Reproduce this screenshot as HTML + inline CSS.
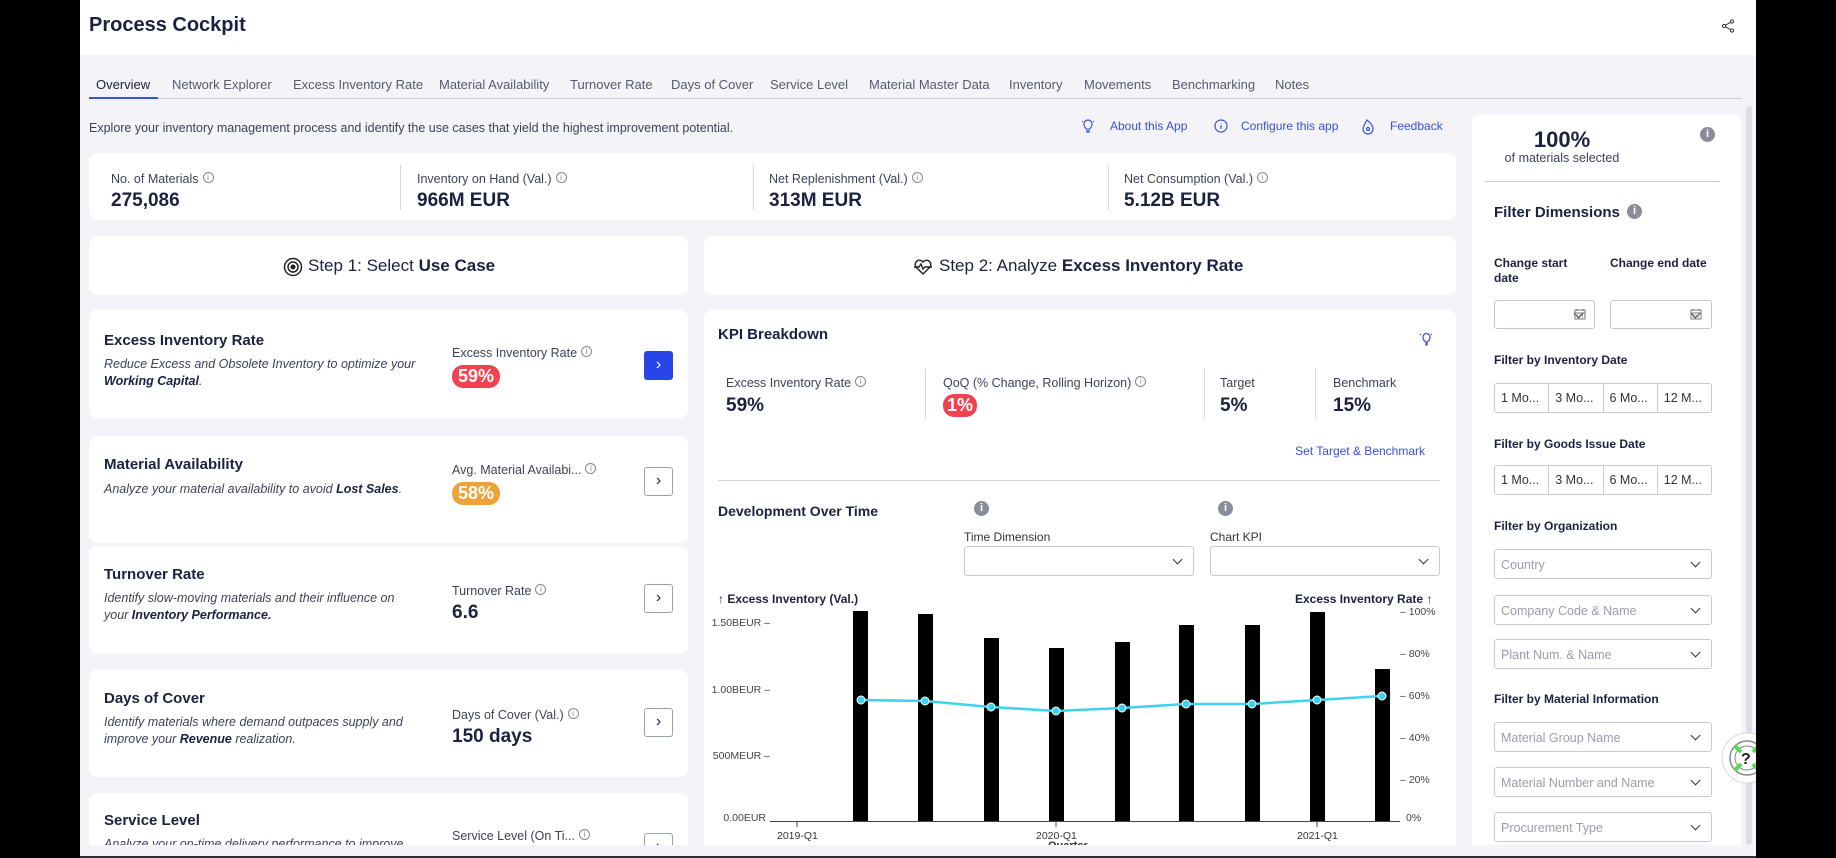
<!DOCTYPE html>
<html><head><meta charset="utf-8"><style>
*{box-sizing:border-box;margin:0;padding:0}
body{width:1836px;height:858px;overflow:hidden;background:#000;font-family:"Liberation Sans",sans-serif;color:#1b2140;position:relative}
.a{position:absolute;white-space:nowrap}
.card{position:absolute;background:#fff;border-radius:8px}
.lbl{font-size:12.5px;color:#3c4257}
.val{font-size:19px;font-weight:bold;color:#1b2140}
.i{display:inline-block;width:11px;height:11px;border:1px solid #888;border-radius:50%;font-size:8px;line-height:9px;text-align:center;color:#888;vertical-align:top;margin-left:4px;font-style:normal}
.ib{position:absolute;width:15px;height:15px;border-radius:50%;background:#8a8d99;color:#fff;font-size:11px;font-weight:bold;text-align:center;line-height:15px}
.ut{font-size:15px;font-weight:bold}
.ud{font-size:12.5px;font-style:italic;color:#3c4257;line-height:17px}
.ud b{color:#1b2140}
.btn{position:absolute;width:29px;height:29px;border:1px solid #9aa0b4;border-radius:3px;background:#fff;text-align:center;line-height:26px;font-size:16px;color:#1b2140}
.badge{display:inline-block;color:#fff;font-weight:bold;font-size:18px;padding:1px 6px;border-radius:11px}
.sel{position:absolute;border:1px solid #c7c9d6;border-radius:3px;background:#fff;height:30px;font-size:12.5px;color:#9a9daa;padding:8px 6px}
.sel:after{content:"";position:absolute;right:12px;top:9px;width:6px;height:6px;border-right:1.5px solid #333;border-bottom:1.5px solid #333;transform:rotate(45deg)}
.fh{position:absolute;font-size:12px;font-weight:bold;color:#1b2140}
.seg{position:absolute;display:flex;border:1px solid #c7c9d6;border-radius:3px;height:30px;background:#fff}
.seg div{flex:1;border-right:1px solid #c7c9d6;font-size:12.5px;line-height:28px;padding-left:6px;color:#333}
.seg div:last-child{border-right:none}
.tab{position:absolute;top:77px;font-size:13px;color:#555b70}
.yl{position:absolute;font-size:10.5px;color:#444;text-align:right;width:70px}
.yr{position:absolute;font-size:10.5px;color:#444}
.bar{position:absolute;width:15px;background:#000}
</style></head><body>
<div style="position:absolute;left:80px;top:0;width:1676px;height:856px;background:#f3f3f8"></div>
<div style="position:absolute;left:80px;top:0;width:1676px;height:55px;background:#fff"></div>
<div class="a" style="left:89px;top:14px;font-size:20px;font-weight:bold">Process Cockpit</div>
<svg class="a" style="left:1721px;top:19px" width="14" height="14" viewBox="0 0 14 14"><circle cx="11" cy="2.5" r="1.6" fill="none" stroke="#333"/><circle cx="3" cy="7" r="1.6" fill="none" stroke="#333"/><circle cx="11" cy="11.5" r="1.6" fill="none" stroke="#333"/><path d="M4.5 6.2L9.5 3.3M4.5 7.8L9.5 10.7" stroke="#333"/></svg>

<div class="tab" style="left:96px;color:#1b2140">Overview</div>
<div class="tab" style="left:172px">Network Explorer</div>
<div class="tab" style="left:293px">Excess Inventory Rate</div>
<div class="tab" style="left:439px">Material Availability</div>
<div class="tab" style="left:570px">Turnover Rate</div>
<div class="tab" style="left:671px">Days of Cover</div>
<div class="tab" style="left:770px">Service Level</div>
<div class="tab" style="left:869px">Material Master Data</div>
<div class="tab" style="left:1009px">Inventory</div>
<div class="tab" style="left:1084px">Movements</div>
<div class="tab" style="left:1172px">Benchmarking</div>
<div class="tab" style="left:1275px">Notes</div>
<div class="a" style="left:89px;top:98px;width:1653px;height:1px;background:#c9cbd8"></div>
<div class="a" style="left:89px;top:97px;width:69px;height:2px;background:#3b4fd8"></div>

<div class="a" style="left:89px;top:121px;font-size:12.5px;color:#3c4257">Explore your inventory management process and identify the use cases that yield the highest improvement potential.</div>
<svg class="a" style="left:1081px;top:118px" width="300" height="18" fill="none" stroke="#3b4fd8" stroke-width="1.2">
<path d="M6 11c-2-1-3-3-3-5a4 4 0 0 1 8 0c0 2-1 4-3 5v3h-2z"/><path d="M1 3l1 1M13 3l-1 1"/>
<circle cx="140" cy="8" r="6"/><path d="M140 7v4M140 5v0.5"/>
<path d="M286 2c3 3 6 5 6 9a5 5 0 0 1-10 0c0-2 1-4 4-9z"/><circle cx="287" cy="11" r="1.5"/>
</svg>
<div class="a" style="left:1110px;top:119px;font-size:12px;color:#3b4fd8">About this App</div>
<div class="a" style="left:1241px;top:119px;font-size:12px;color:#3b4fd8">Configure this app</div>
<div class="a" style="left:1390px;top:119px;font-size:12px;color:#3b4fd8">Feedback</div>

<div class="card" style="left:89px;top:153px;width:1367px;height:67px"></div>
<div class="a" style="left:400px;top:165px;width:1px;height:45px;background:#d5d7e0"></div>
<div class="a" style="left:753px;top:165px;width:1px;height:45px;background:#d5d7e0"></div>
<div class="a" style="left:1108px;top:165px;width:1px;height:45px;background:#d5d7e0"></div>
<div class="a lbl" style="left:111px;top:172px">No. of Materials<i class="i">i</i></div>
<div class="a val" style="left:111px;top:190px">275,086</div>
<div class="a lbl" style="left:417px;top:172px">Inventory on Hand (Val.)<i class="i">i</i></div>
<div class="a val" style="left:417px;top:190px">966M EUR</div>
<div class="a lbl" style="left:769px;top:172px">Net Replenishment (Val.)<i class="i">i</i></div>
<div class="a val" style="left:769px;top:190px">313M EUR</div>
<div class="a lbl" style="left:1124px;top:172px">Net Consumption (Val.)<i class="i">i</i></div>
<div class="a val" style="left:1124px;top:190px">5.12B EUR</div>

<div class="card" style="left:89px;top:236px;width:599px;height:59px"></div>
<svg class="a" style="left:283px;top:257px" width="20" height="20" fill="none" stroke="#222" stroke-width="1.5"><circle cx="10" cy="10" r="8.5"/><circle cx="10" cy="10" r="5"/><circle cx="10" cy="10" r="1.8" fill="#222"/></svg>
<div class="a" style="left:308px;top:256px;font-size:17px">Step 1: Select <b>Use Case</b></div>
<div class="card" style="left:704px;top:236px;width:752px;height:59px"></div>
<svg class="a" style="left:913px;top:257px" width="20" height="20" fill="none" stroke="#222" stroke-width="1.4"><path d="M10 17L3 10a4 4 0 0 1 7-5 4 4 0 0 1 7 5l-7 7z"/><path d="M1 10h5l2-3 2 5 2-2h7"/></svg>
<div class="a" style="left:939px;top:256px;font-size:17px">Step 2: Analyze <b>Excess Inventory Rate</b></div>

<div class="card" style="left:89px;top:310px;width:599px;height:108px"></div>
<div class="a ut" style="left:104px;top:332px">Excess Inventory Rate</div>
<div class="a ud" style="left:104px;top:356px">Reduce Excess and Obsolete Inventory to optimize your<br><b>Working Capital</b>.</div>
<div class="a lbl" style="left:452px;top:346px">Excess Inventory Rate<i class="i">i</i></div>
<div class="a" style="left:452px;top:365px"><span class="badge" style="background:#f0434f">59%</span></div>
<div class="btn" style="left:644px;top:351px;background:#2845e8;border-color:#2845e8;color:#fff">&#8250;</div>

<div class="card" style="left:89px;top:436px;width:599px;height:107px"></div>
<div class="a ut" style="left:104px;top:456px">Material Availability</div>
<div class="a ud" style="left:104px;top:481px">Analyze your material availability to avoid <b>Lost Sales</b>.</div>
<div class="a lbl" style="left:452px;top:463px">Avg. Material Availabi...<i class="i">i</i></div>
<div class="a" style="left:452px;top:482px"><span class="badge" style="background:#eea23a">58%</span></div>
<div class="btn" style="left:644px;top:467px">&#8250;</div>

<div class="card" style="left:89px;top:546px;width:599px;height:107px"></div>
<div class="a ut" style="left:104px;top:566px">Turnover Rate</div>
<div class="a ud" style="left:104px;top:590px">Identify slow-moving materials and their influence on<br>your <b>Inventory Performance.</b></div>
<div class="a lbl" style="left:452px;top:584px">Turnover Rate<i class="i">i</i></div>
<div class="a val" style="left:452px;top:602px">6.6</div>
<div class="btn" style="left:644px;top:584px">&#8250;</div>

<div class="card" style="left:89px;top:670px;width:599px;height:107px"></div>
<div class="a ut" style="left:104px;top:690px">Days of Cover</div>
<div class="a ud" style="left:104px;top:714px">Identify materials where demand outpaces supply and<br>improve your <b>Revenue</b> realization.</div>
<div class="a lbl" style="left:452px;top:708px">Days of Cover (Val.)<i class="i">i</i></div>
<div class="a val" style="left:452px;top:726px">150 days</div>
<div class="btn" style="left:644px;top:708px">&#8250;</div>

<div class="card" style="left:89px;top:793px;width:599px;height:52px;border-radius:8px 8px 0 0;overflow:hidden">
<div class="a ut" style="left:15px;top:19px">Service Level</div>
<div class="a ud" style="left:15px;top:43px">Analyze your on-time delivery performance to improve</div>
<div class="a lbl" style="left:363px;top:36px">Service Level (On Ti...<i class="i">i</i></div>
<div class="btn" style="left:555px;top:40px">&#8250;</div>
</div>

<div class="card" style="left:704px;top:310px;width:752px;height:535px;border-radius:8px 8px 0 0"></div>
<div class="a" style="left:718px;top:326px;font-size:15px;font-weight:bold">KPI Breakdown</div>
<svg class="a" style="left:1419px;top:331px" width="14" height="16" fill="none" stroke="#3b4fd8" stroke-width="1.2"><path d="M7 11c-2-1-3-3-3-5a3.5 3.5 0 0 1 7 0c0 2-1 4-3 5v3h-1z"/><path d="M1 3l1 1M13 3l-1 1"/></svg>
<div class="a lbl" style="left:726px;top:376px">Excess Inventory Rate<i class="i">i</i></div>
<div class="a val" style="left:726px;top:395px">59%</div>
<div class="a" style="left:925px;top:369px;width:1px;height:50px;background:#d5d7e0"></div>
<div class="a lbl" style="left:943px;top:376px">QoQ (% Change, Rolling Horizon)<i class="i">i</i></div>
<div class="a" style="left:943px;top:394px"><span class="badge" style="background:#f0434f;padding:1px 4px">1%</span></div>
<div class="a" style="left:1204px;top:369px;width:1px;height:50px;background:#d5d7e0"></div>
<div class="a lbl" style="left:1220px;top:376px">Target</div>
<div class="a val" style="left:1220px;top:395px">5%</div>
<div class="a" style="left:1315px;top:369px;width:1px;height:50px;background:#d5d7e0"></div>
<div class="a lbl" style="left:1333px;top:376px">Benchmark</div>
<div class="a val" style="left:1333px;top:395px">15%</div>
<div class="a" style="left:1270px;top:444px;width:155px;text-align:right;font-size:12px;color:#3b4fd8">Set Target &amp; Benchmark</div>
<div class="a" style="left:718px;top:480px;width:722px;height:1px;background:#d5d7e0"></div>
<div class="a" style="left:718px;top:503px;font-size:14px;font-weight:bold">Development Over Time</div>
<div class="ib" style="left:974px;top:501px">i</div>
<div class="ib" style="left:1218px;top:501px">i</div>
<div class="a" style="left:964px;top:530px;font-size:12px;color:#333">Time Dimension</div>
<div class="a" style="left:1210px;top:530px;font-size:12px;color:#333">Chart KPI</div>
<div class="sel" style="left:964px;top:546px;width:230px"></div>
<div class="sel" style="left:1210px;top:546px;width:230px"></div>

<div class="a" style="left:718px;top:592px;font-size:12px;font-weight:bold">&#8593; Excess Inventory (Val.)</div>
<div class="a" style="left:1295px;top:592px;font-size:12px;font-weight:bold">Excess Inventory Rate &#8593;</div>
<div class="yl" style="left:700px;top:617px">1.50BEUR –</div>
<div class="yl" style="left:700px;top:684px">1.00BEUR –</div>
<div class="yl" style="left:700px;top:750px">500MEUR –</div>
<div class="yl" style="left:696px;top:812px">0.00EUR</div>
<div class="yr" style="left:1400px;top:606px">– 100%</div>
<div class="yr" style="left:1400px;top:648px">– 80%</div>
<div class="yr" style="left:1400px;top:690px">– 60%</div>
<div class="yr" style="left:1400px;top:732px">– 40%</div>
<div class="yr" style="left:1400px;top:774px">– 20%</div>
<div class="yr" style="left:1406px;top:812px">0%</div>
<div class="a" style="left:770px;top:821px;width:630px;height:1px;background:#444"></div>
<div class="bar" style="left:853px;top:611px;height:210px"></div>
<div class="bar" style="left:918px;top:614px;height:207px"></div>
<div class="bar" style="left:984px;top:638px;height:183px"></div>
<div class="bar" style="left:1049px;top:648px;height:173px"></div>
<div class="bar" style="left:1115px;top:642px;height:179px"></div>
<div class="bar" style="left:1179px;top:625px;height:196px"></div>
<div class="bar" style="left:1245px;top:625px;height:196px"></div>
<div class="bar" style="left:1310px;top:612px;height:209px"></div>
<div class="bar" style="left:1375px;top:669px;height:152px"></div>
<svg class="a" style="left:0;top:0" width="1836" height="858">
<polyline fill="none" stroke="#3dd3ef" stroke-width="2.5" points="861,700 925,701 991,707 1056,711 1122,708 1186,704 1252,704 1317,700 1382,696"/>
<g fill="#3dd3ef" stroke="#fff" stroke-width="1"><circle cx="861" cy="700" r="4"/><circle cx="925" cy="701" r="4"/><circle cx="991" cy="707" r="4"/><circle cx="1056" cy="711" r="4"/><circle cx="1122" cy="708" r="4"/><circle cx="1186" cy="704" r="4"/><circle cx="1252" cy="704" r="4"/><circle cx="1317" cy="700" r="4"/><circle cx="1382" cy="696" r="4"/></g>
<path d="M797 821v6M1056 821v6M1317 821v6" stroke="#444"/>
</svg>
<div class="a" style="left:777px;top:830px;font-size:10.5px;color:#333">2019-Q1</div>
<div class="a" style="left:1036px;top:830px;font-size:10.5px;color:#333">2020-Q1</div>
<div class="a" style="left:1297px;top:830px;font-size:10.5px;color:#333">2021-Q1</div>
<div class="a" style="left:1048px;top:840px;font-size:11px;font-weight:bold;color:#333;height:5px;overflow:hidden;line-height:13px">Quarter →</div>

<div class="card" style="left:1472px;top:114px;width:269px;height:731px;border-radius:8px 8px 0 0"></div>
<div class="a" style="left:1746px;top:106px;width:6px;height:739px;background:#dcdde5;border-radius:3px"></div>
<div class="a" style="left:1472px;top:127px;width:180px;text-align:center;font-size:22px;font-weight:bold">100%</div>
<div class="a" style="left:1472px;top:151px;width:180px;text-align:center;font-size:12.5px;color:#3c4257">of materials selected</div>
<div class="ib" style="left:1700px;top:127px">i</div>
<div class="a" style="left:1485px;top:181px;width:235px;height:1px;background:#c9cbd8"></div>
<div class="a" style="left:1494px;top:204px;font-size:15px;font-weight:bold">Filter Dimensions</div>
<div class="ib" style="left:1627px;top:204px">i</div>
<div class="fh" style="left:1494px;top:256px;line-height:15px">Change start<br>date</div>
<div class="fh" style="left:1610px;top:256px">Change end date</div>
<div class="sel" style="left:1494px;top:300px;width:101px;height:29px;border-color:#c3c4d4"></div>
<div class="sel" style="left:1610px;top:300px;width:102px;height:29px;border-color:#c3c4d4"></div>
<svg class="a" style="left:1574px;top:308px" width="12" height="12"><rect x="1" y="2" width="10" height="9" fill="none" stroke="#777"/><path d="M1 5h10M3 1v2M9 1v2M3 7h1M5.5 7h1M8 7h1M3 9h1M5.5 9h1M8 9h1" stroke="#777"/></svg>
<svg class="a" style="left:1690px;top:308px" width="12" height="12"><rect x="1" y="2" width="10" height="9" fill="none" stroke="#777"/><path d="M1 5h10M3 1v2M9 1v2M3 7h1M5.5 7h1M8 7h1M3 9h1M5.5 9h1M8 9h1" stroke="#777"/></svg>
<div class="fh" style="left:1494px;top:353px">Filter by Inventory Date</div>
<div class="seg" style="left:1494px;top:383px;width:218px"><div>1 Mo...</div><div>3 Mo...</div><div>6 Mo...</div><div>12 M...</div></div>
<div class="fh" style="left:1494px;top:437px">Filter by Goods Issue Date</div>
<div class="seg" style="left:1494px;top:465px;width:218px"><div>1 Mo...</div><div>3 Mo...</div><div>6 Mo...</div><div>12 M...</div></div>
<div class="fh" style="left:1494px;top:519px">Filter by Organization</div>
<div class="sel" style="left:1494px;top:549px;width:218px">Country</div>
<div class="sel" style="left:1494px;top:595px;width:218px">Company Code &amp; Name</div>
<div class="sel" style="left:1494px;top:639px;width:218px">Plant Num. &amp; Name</div>
<div class="fh" style="left:1494px;top:692px">Filter by Material Information</div>
<div class="sel" style="left:1494px;top:722px;width:218px">Material Group Name</div>
<div class="sel" style="left:1494px;top:767px;width:218px">Material Number and Name</div>
<div class="sel" style="left:1494px;top:812px;width:218px">Procurement Type</div>

<svg class="a" style="left:1720px;top:732px" width="36" height="52"><circle cx="27" cy="26" r="25" fill="#fff" stroke="#d5d6de"/><circle cx="27" cy="26" r="17" fill="none" stroke="#888" stroke-width="1.5"/><circle cx="27" cy="26" r="12" fill="none" stroke="#888"/><path d="M15 14l6 6M39 14l-6 6M15 38l6-6M39 38l-6-6" stroke="#4fe04f" stroke-width="4"/><text x="21" y="32" font-size="16" font-family="Liberation Sans" font-weight="bold" fill="#222">?</text></svg>
<div class="a" style="left:1756px;top:0;width:80px;height:858px;background:#000"></div>
<div class="a" style="left:80px;top:856px;width:1676px;height:2px;background:#333"></div>
</body></html>
